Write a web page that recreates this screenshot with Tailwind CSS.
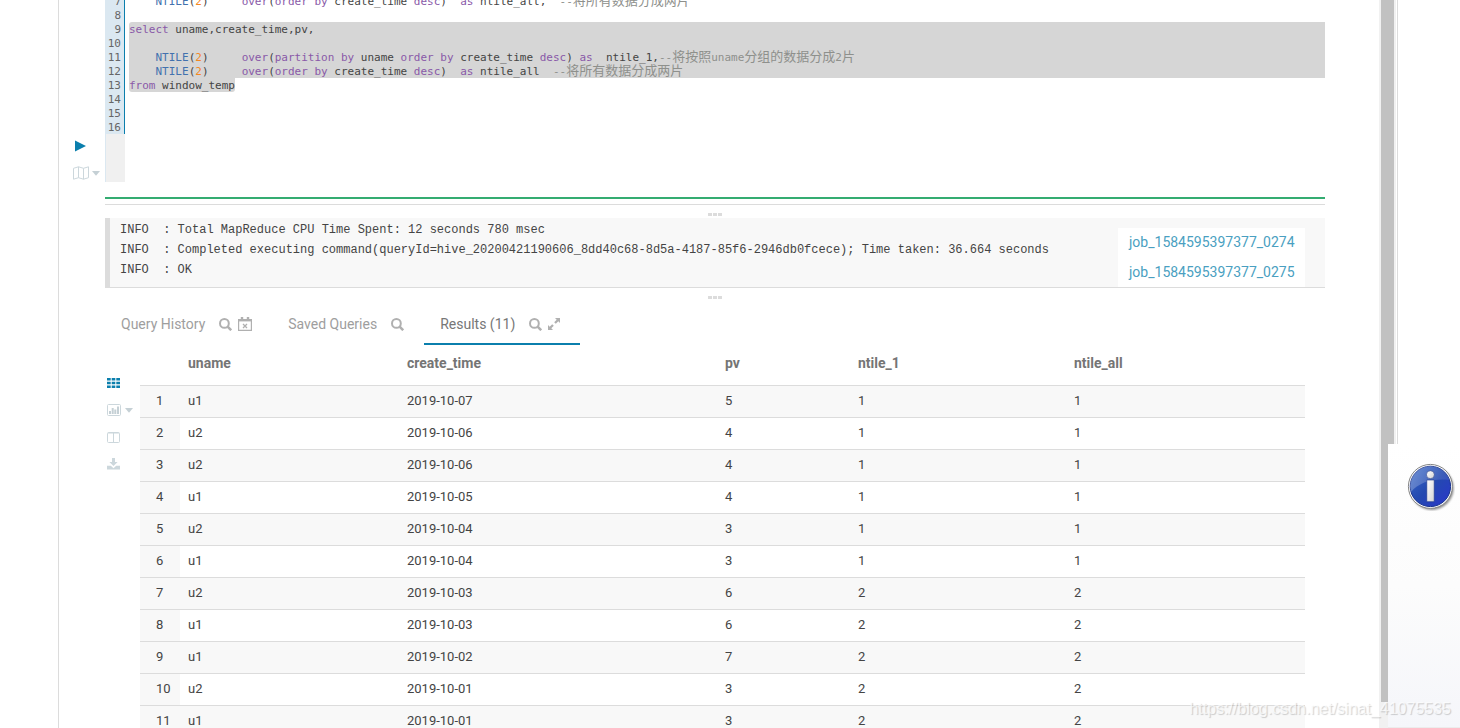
<!DOCTYPE html>
<html lang="en">
  <head>
    <meta charset="UTF-8" />
    <meta name="viewport" content="width=device-width, initial-scale=1.0" />
    <title>Hive Query Editor</title>
    <script src="https://cdn.jsdelivr.net/npm/@tailwindcss/browser@4"></script>
  </head>
  <body class="relative flex h-screen overflow-hidden bg-white font-[Roboto,'Noto_Sans_CJK_SC',sans-serif] text-[13px] text-[#444]">
    <!-- Collapsed assist panel -->
    <aside class="w-[59px] shrink-0 border-r border-[#dcdcdc]"></aside>

    <main class="mr-[54px] min-w-0 flex-1">
      <!-- Editor -->
      <section class="flex h-[182px]">
        <div class="flex w-[46px] shrink-0 flex-col justify-end gap-[14px] pl-[14px]">
          <button type="button" aria-label="Execute" class="flex h-[13px] items-center pl-[2px]">
            <svg class="h-[12px] w-[11px]" viewBox="0 0 11 12" fill="#0b7fad"><path d="M0 0.5 11 6 0 11.5z" /></svg>
          </button>
          <button type="button" aria-label="Explain" class="mb-[2px] flex h-[14px] items-center gap-[3px]">
            <svg class="h-[14px] w-[16px]" viewBox="0 0 16 14" fill="none" stroke="#ccd7dc"><path d="M.5 2.3 5.5 .8 10.5 2.3 15.5 .8V11.7L10.5 13.2 5.5 11.7 .5 13.2zM5.5 .8V11.7M10.5 2.3V13.2" /></svg>
            <svg class="h-[5px] w-[8px]" viewBox="0 0 8 5" fill="#c5d0d5"><path d="M0 0H8L4 4.8z" /></svg>
          </button>
        </div>

        <div class="flex min-w-0 flex-1 flex-col justify-end overflow-hidden font-['DejaVu_Sans_Mono','Noto_Sans_CJK_SC',monospace] text-[11px] leading-[14px]">
          <div class="flex shrink-0">
            <pre class="h-[140px] w-[20px] shrink-0 border-r border-[#0b7fad] bg-[#dbe8f1] pr-[3px] pt-px text-right font-[inherit] text-[#666]">7
8
9
10
11
12
13
14
15
16</pre>
            <div class="min-w-0 flex-1 pl-1 *:whitespace-pre">
              <div class="h-[14px]">    <span class="text-[#4271ae]">NTILE</span>(<span class="text-[#f5871f]">2</span>)     <span class="text-[#8959a8]">over</span>(<span class="text-[#8959a8]">order</span> <span class="text-[#8959a8]">by</span> create_time <span class="text-[#8959a8]">desc</span>)  <span class="text-[#8959a8]">as</span> ntile_all,  <span class="text-[#8e908c]">--<span class="text-[13px]">将所有数据分成两片</span></span></div>
              <div class="h-[14px]"></div>
              <div class="h-[14px] rounded-tl-[3px] bg-[#d6d6d6] leading-[16px]"><span class="text-[#8959a8]">select</span> uname,create_time,pv,</div>
              <div class="h-[14px] bg-[#d6d6d6]"></div>
              <div class="h-[14px] bg-[#d6d6d6]">    <span class="text-[#4271ae]">NTILE</span>(<span class="text-[#f5871f]">2</span>)     <span class="text-[#8959a8]">over</span>(<span class="text-[#8959a8]">partition</span> <span class="text-[#8959a8]">by</span> uname <span class="text-[#8959a8]">order</span> <span class="text-[#8959a8]">by</span> create_time <span class="text-[#8959a8]">desc</span>) <span class="text-[#8959a8]">as</span>  ntile_1,<span class="text-[#8e908c]">--<span class="text-[13px]">将按照</span>uname<span class="text-[13px]">分组的数据分成</span>2<span class="text-[13px]">片</span></span></div>
              <div class="h-[14px] bg-[#d6d6d6]">    <span class="text-[#4271ae]">NTILE</span>(<span class="text-[#f5871f]">2</span>)     <span class="text-[#8959a8]">over</span>(<span class="text-[#8959a8]">order</span> <span class="text-[#8959a8]">by</span> create_time <span class="text-[#8959a8]">desc</span>)  <span class="text-[#8959a8]">as</span> ntile_all  <span class="text-[#8e908c]">--<span class="text-[13px]">将所有数据分成两片</span></span></div>
              <div class="h-[14px] w-fit rounded-b-[3px] bg-[#d6d6d6] leading-[16px]"><span class="text-[#8959a8]">from</span> window_temp</div>
            </div>
          </div>
          <div class="h-[48px] w-[20px] shrink-0 border-l border-[#dbe8f1] bg-[#f0f0f0]"></div>
        </div>
      </section>

      <div class="ml-[46px]">
        <!-- Progress -->
        <div class="mt-[15px] h-[2px] bg-[#34ac71]"></div>
        <div class="mt-[5px] h-px bg-[#dcdcdc]"></div>
        <div class="flex h-[13px] items-end justify-center gap-px pb-[2px]">
          <i class="h-[3px] w-[4px] bg-[#dcdcdc]"></i><i class="h-[3px] w-[4px] bg-[#dcdcdc]"></i><i class="h-[3px] w-[4px] bg-[#dcdcdc]"></i>
        </div>

        <!-- Logs -->
        <section class="flex h-[70px] justify-between border-b border-l-5 border-[#dcdcdc] bg-[#f8f8f8]">
          <pre class="pl-[10px] pt-[2px] font-['Liberation_Mono',monospace] text-[12px] leading-[20px]">INFO  : Total MapReduce CPU Time Spent: 12 seconds 780 msec
INFO  : Completed executing command(queryId=hive_20200421190606_8dd40c68-8d5a-4187-85f6-2946db0fcece); Time taken: 36.664 seconds
INFO  : OK</pre>
          <div class="mr-5 mt-[10px] flex w-[187px] flex-col gap-[2px] overflow-hidden bg-white pl-[11px] text-[14px] leading-[28px] text-[#4a9fc1]">
            <a href="#">job_1584595397377_0274</a>
            <a href="#">job_1584595397377_0275</a>
          </div>
        </section>
        <div class="flex h-[16px] items-center justify-center gap-px pt-[3px]">
          <i class="h-[3px] w-[4px] bg-[#dcdcdc]"></i><i class="h-[3px] w-[4px] bg-[#dcdcdc]"></i><i class="h-[3px] w-[4px] bg-[#dcdcdc]"></i>
        </div>

        <!-- Tabs -->
        <nav class="flex h-[41px] text-[14px] text-[#9e9e9e]">
          <a href="#" class="flex items-center border-b-2 border-transparent pl-4 pr-5 pt-px">Query History
            <svg class="ml-[14px] h-[13px] w-[13px]" viewBox="0 0 13 13" fill="none" stroke="#b0b0b0" stroke-width="2"><circle cx="5.4" cy="5.4" r="4.4" /><path d="M8.6 8.6 12.2 12.2" stroke-width="2.6" /></svg>
            <svg class="ml-[6px] h-[14px] w-[14px]" viewBox="0 0 14 14" fill="none" stroke="#b0b0b0"><path d="M.6 2.5H13.4V13.4H.6z" stroke-width="1.2" /><path d="M.5 3.4H13.5" stroke-width="2" /><path d="M4 0V3.5M10 0V3.5" stroke-width="2.4" /><path d="M5 7 9 11M9 7 5 11" stroke-width="1.3" /></svg>
          </a>
          <a href="#" class="flex items-center border-b-2 border-transparent pl-4 pr-5 pt-px">Saved Queries
            <svg class="ml-[14px] h-[13px] w-[13px]" viewBox="0 0 13 13" fill="none" stroke="#b0b0b0" stroke-width="2"><circle cx="5.4" cy="5.4" r="4.4" /><path d="M8.6 8.6 12.2 12.2" stroke-width="2.6" /></svg>
          </a>
          <a href="#" class="flex items-center border-b-2 border-[#0b7fad] pl-4 pr-5 pt-px text-[#777]">Results (11)
            <svg class="ml-[14px] h-[13px] w-[13px]" viewBox="0 0 13 13" fill="none" stroke="#b0b0b0" stroke-width="2"><circle cx="5.4" cy="5.4" r="4.4" /><path d="M8.6 8.6 12.2 12.2" stroke-width="2.6" /></svg>
            <svg class="ml-[6px] h-[12px] w-[12px]" viewBox="0 0 12 12" fill="#b0b0b0"><path d="M7 0H12V5L10.3 3.3 7.8 5.8 6.2 4.2 8.7 1.7zM5 12H0V7L1.7 8.7 4.2 6.2 5.8 7.8 3.3 10.3z" /></svg>
          </a>
        </nav>

        <!-- Results -->
        <section class="flex">
          <div class="flex w-[35px] shrink-0 flex-col gap-[13px] pl-[2px] pt-[31px]">
            <button type="button" aria-label="Grid" class="flex h-[14px] items-center">
              <svg class="h-[10px] w-[13px]" viewBox="0 0 13 10" fill="#0b7fad"><path d="M0 0h3.7v2.6H0zM4.7 0h3.6v2.6H4.7zM9.3 0H13v2.6H9.3zM0 3.7h3.7v2.6H0zM4.7 3.7h3.6v2.6H4.7zM9.3 3.7H13v2.6H9.3zM0 7.4h3.7V10H0zM4.7 7.4h3.6V10H4.7zM9.3 7.4H13V10H9.3z" /></svg>
            </button>
            <button type="button" aria-label="Chart" class="flex h-[14px] items-center gap-1">
              <svg class="h-[12px] w-[14px]" viewBox="0 0 14 12"><rect x=".5" y=".5" width="13" height="11" rx="1" fill="none" stroke="#ccd7dc" /><path d="M2 7h2v3H2zM4.7 4h2v6H4.7zM7.3 5.5h2V10H7.3zM10 2.5h2V10H10z" fill="#c5d0d5" /></svg>
              <svg class="h-[5px] w-[8px]" viewBox="0 0 8 5" fill="#c5d0d5"><path d="M0 0H8L4 4.8z" /></svg>
            </button>
            <button type="button" aria-label="Columns" class="flex h-[14px] items-center">
              <svg class="h-[11px] w-[13px]" viewBox="0 0 13 11" fill="none" stroke="#ccd7dc"><rect x=".5" y=".5" width="12" height="10" rx="1" /><path d="M1 1H12M6.5 1V10" /></svg>
            </button>
            <button type="button" aria-label="Download" class="flex h-[14px] items-center">
              <svg class="h-[12px] w-[13px]" viewBox="0 0 13 12" fill="#ccd7dc"><path d="M5 0H8V4H10.6L6.5 8 2.4 4H5zM0 7.8H3.8L6.5 10.2 9.2 7.8H13V11.5H0z" /></svg>
            </button>
          </div>

          <table class="mr-5 flex-1 table-fixed border-collapse text-left">
            <colgroup>
              <col class="w-[40px]" />
              <col class="w-[219px]" />
              <col class="w-[318px]" />
              <col class="w-[133px]" />
              <col class="w-[216px]" />
              <col />
            </colgroup>
            <thead class="text-[14px] leading-[20px] text-[#757575]">
              <tr class="h-[40px] border-b border-[#dcdcdc]">
                <th></th>
                <th class="px-2 pb-1 font-bold">uname</th>
                <th class="px-2 pb-1 font-bold">create_time</th>
                <th class="px-2 pb-1 font-bold">pv</th>
                <th class="px-2 pb-1 font-bold">ntile_1</th>
                <th class="px-2 pb-1 font-bold">ntile_all</th>
              </tr>
            </thead>
            <tbody id="rows"></tbody>
          </table>
        </section>
      </div>
    </main>

    <!-- Scrollbar -->
    <div class="w-[17px] shrink-0 bg-[#f1f1f1] pl-[2px]">
      <div class="h-[702px] w-[13px] bg-[#c1c1c1]"></div>
    </div>
    <div class="w-[64px] shrink-0 pl-px"><div class="h-full border-l border-[#dcdcdc]"></div></div>

    <!-- Notification -->
    <div class="absolute bottom-0 right-0 top-[444px] w-[72px] border-b border-[#ececec] bg-linear-to-b from-white via-[#fcfcfc] to-[#f5f6fa] pl-[19px] pt-[19px]">
      <svg class="h-[48px] w-[48px]" viewBox="0 0 48 48">
        <defs>
          <linearGradient id="ball" x1="0" y1="0" x2="1" y2="1">
            <stop offset="0" stop-color="#3c6cc8" />
            <stop offset=".5" stop-color="#2449b0" />
            <stop offset="1" stop-color="#2b35cc" />
          </linearGradient>
          <linearGradient id="gloss" x1="0" y1="0" x2="1" y2="0">
            <stop offset="0" stop-color="#fff" stop-opacity=".25" />
            <stop offset="1" stop-color="#fff" stop-opacity=".08" />
          </linearGradient>
          <linearGradient id="stem" x1="0" y1="0" x2="1" y2="1">
            <stop offset="0" stop-color="#fff" />
            <stop offset="1" stop-color="#d4d4d4" />
          </linearGradient>
          <filter id="soft"><feGaussianBlur stdDeviation="1" /></filter>
        </defs>
        <circle cx="24.8" cy="25.2" r="21.8" fill="#000" opacity=".45" filter="url(#soft)" />
        <circle cx="23.4" cy="23.4" r="22" fill="#fff" stroke="#858585" />
        <circle cx="23.4" cy="23.4" r="20.2" fill="url(#ball)" stroke="#1b3690" />
        <path d="M4 29A20 20 0 0 1 42.8 17C27 15 12 19 4 29z" fill="url(#gloss)" />
        <g stroke="#1d3587" stroke-width=".6" fill="url(#stem)"><circle cx="23.4" cy="11.7" r="4" /><path d="M19.8 17H27.2V38.7H19.8z" /></g>
      </svg>
    </div>

    <p class="absolute bottom-[7px] right-[9px] font-['Liberation_Sans',sans-serif] text-[16px] leading-[24px] text-white/70 [text-shadow:1px_1px_1px_#00000030]">https://blog.csdn.net/sinat_41075535</p>

    <script>
      const data = [
        ['u1', '2019-10-07', 5, 1, 1],
        ['u2', '2019-10-06', 4, 1, 1],
        ['u2', '2019-10-06', 4, 1, 1],
        ['u1', '2019-10-05', 4, 1, 1],
        ['u2', '2019-10-04', 3, 1, 1],
        ['u1', '2019-10-04', 3, 1, 1],
        ['u2', '2019-10-03', 6, 2, 2],
        ['u1', '2019-10-03', 6, 2, 2],
        ['u1', '2019-10-02', 7, 2, 2],
        ['u2', '2019-10-01', 3, 2, 2],
        ['u1', '2019-10-01', 3, 2, 2],
      ];

      document.getElementById('rows').innerHTML = data
        .map((row, i) => `
          <tr class="h-[32px] border-b border-[#dcdcdc] odd:bg-[#f8f8f8]">
            <td class="bg-[#f8f8f8] pl-4">${i + 1}</td>
            ${row.map((cell) => `<td class="px-2">${cell}</td>`).join('')}
          </tr>`)
        .join('');
    </script>
  </body>
</html>
